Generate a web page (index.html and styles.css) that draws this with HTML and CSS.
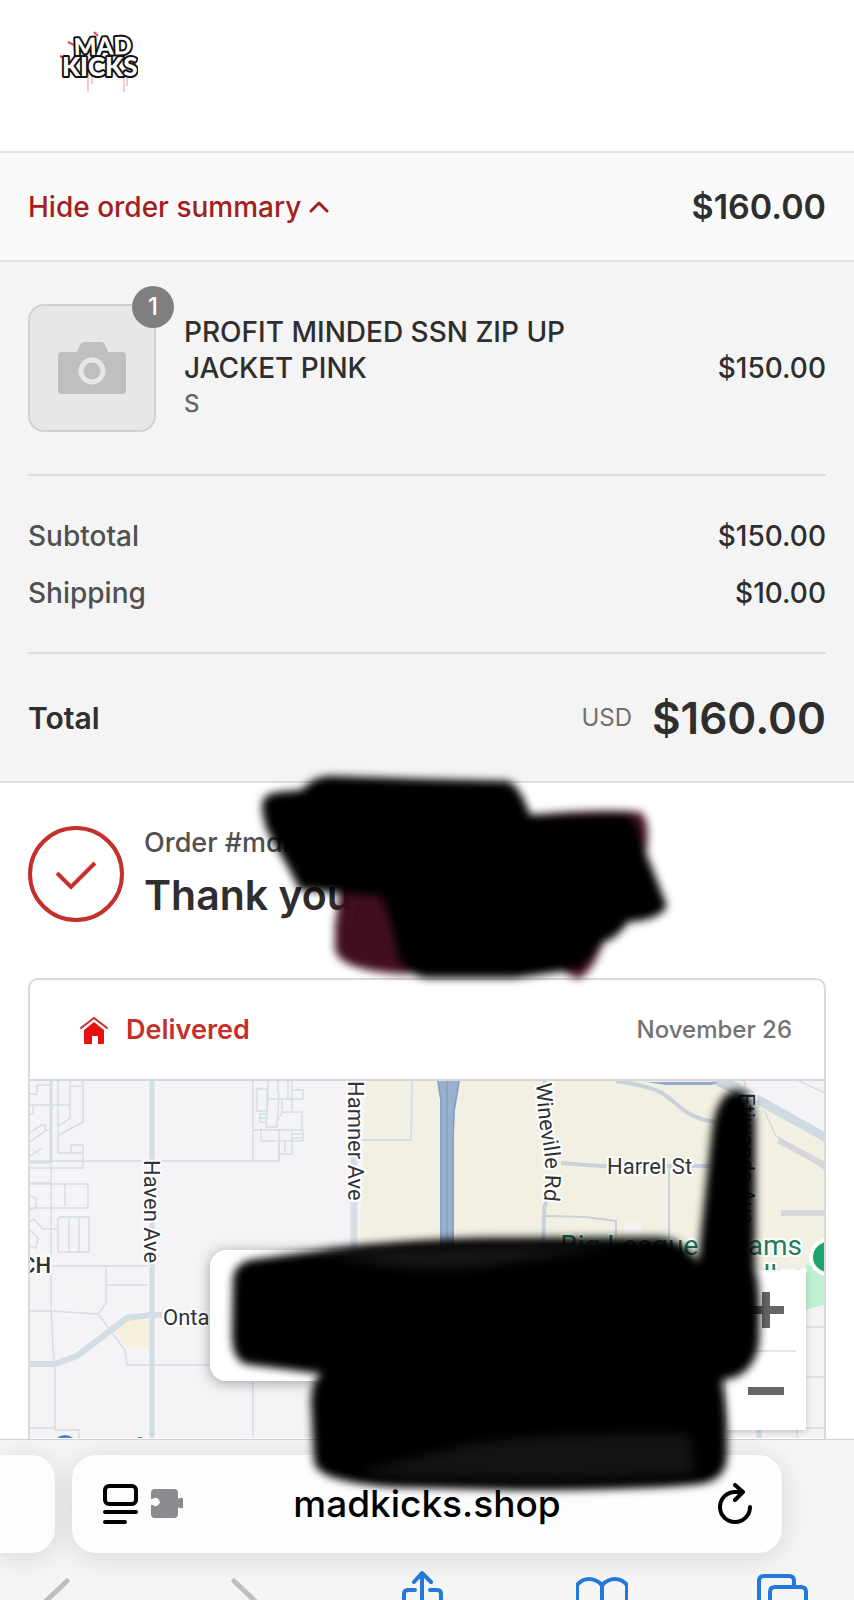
FILE: index.html
```html
<!DOCTYPE html>
<html lang="en">
  <head>
    <meta charset="UTF-8" />
    <meta name="viewport" content="width=device-width, initial-scale=1" />
    <title>Thank you - Mad Kicks</title>
    <link rel="stylesheet" href="styles.css">
  </head>
  <body>
    <div class="page">
      <header class="site-header">
        <a href="#" aria-label="Mad Kicks">
          <svg class="logo" viewBox="56 28 82 66">
            <g stroke="#e05050" fill="none" stroke-width="1">
              <path d="M88 72V92M92 72V84M124 72V92M127 72V86" opacity=".6" />
              <path d="M68 42l8 4M94 32l4 4M118 54l6-3M60 56l6 3M130 66l6-3M132 62l3-4" stroke-width="2" />
            </g>
            <g class="logo-text">
              <text x="74" y="55" font-size="24" transform="rotate(-2 96 54)">MAD</text>
              <text x="62" y="76" font-size="26">KICKS</text>
            </g>
          </svg>
        </a>
      </header>

      <div class="summary-bar">
        <button class="summary-toggle" type="button" aria-expanded="true">
          Hide order summary
          <svg width="20" height="12" viewBox="0 0 20 12"><path d="M2 10l8-8 8 8" fill="none" stroke="currentColor" stroke-width="3" stroke-linecap="round" stroke-linejoin="round" /></svg>
        </button>
        <strong class="summary-price">$160.00</strong>
      </div>

      <section class="summary">
        <div class="product">
          <div class="thumb">
            <svg width="68" height="53" viewBox="0 0 68 53">
              <path fill="#bfbfbf" d="M4 10h15l3-7q1-3 4-3h17q3 0 4 3l3 7h14q4 0 4 4v34q0 4-4 4H4q-4 0-4-4V14q0-4 4-4z" />
              <circle cx="34" cy="29" r="11" fill="#bfbfbf" stroke="#e7e7e7" stroke-width="5" />
            </svg>
            <span class="badge">1</span>
          </div>
          <div class="product-info">
            <div class="product-name">PROFIT MINDED SSN ZIP UP JACKET PINK</div>
            <div class="variant">S</div>
          </div>
          <div class="price">$150.00</div>
        </div>

        <table class="lines">
          <tr><th>Subtotal</th><td>$150.00</td></tr>
          <tr><th>Shipping</th><td>$10.00</td></tr>
        </table>

        <div class="total">
          <span class="total-label">Total</span>
          <span class="currency">USD</span>
          <strong class="total-price">$160.00</strong>
        </div>
      </section>

      <main class="content">
        <div class="thanks">
          <svg class="check" width="96" height="96" viewBox="0 0 96 96" fill="none" stroke="#c4302b">
            <circle cx="48" cy="48" r="46" stroke-width="4" />
            <path d="M29 47l14 14 24-24" stroke-width="4" />
          </svg>
          <div>
            <div class="order-no">Order #mdk</div>
            <h1>Thank you, E</h1>
          </div>
        </div>

        <div class="card">
          <div class="card-head">
            <svg width="28" height="28" viewBox="0 0 28 28">
              <path d="M1 12L14 2l13 10" fill="none" stroke="#c4302b" stroke-width="2" stroke-linecap="round" />
              <path d="M14 6l10 8v13q0 1-1 1h-5v-8h-6v8H5q-1 0-1-1V14z" fill="#e91010" />
            </svg>
            <h2>Delivered</h2>
            <span class="date">November 26</span>
          </div>

          <div class="map">
            <svg class="map-art" viewBox="30 1081 794 357" preserveAspectRatio="xMinYMin slice">
              <rect x="30" y="1081" width="800" height="360" fill="#f5f3f5" />
              <path d="M366 1081H830V1300L806 1310H357z" fill="#f2f0e3" />
              <path d="M745 1081H830V1140L757 1098z" fill="#f4f3f5" />
              <path d="M806 1264l20 8v32l-20 6z" fill="#bdf0cf" />
              <path d="M806 1312l24-9v140h-24z" fill="#f5f3f5" />
              <path d="M112 1328l16-8h23v27q-18 2-26-2z" fill="#f5f0dc" />

              <!-- small streets -->
              <g fill="none" stroke="#d3dfe6" stroke-width="1.5">
                <path d="M30 1161H279V1140M253 1081V1161M253 1382V1440M51 1162V1310L54 1362M55 1364V1430L79 1430V1440M30 1428h25" />
                <path d="M30 1105H70V1090M58 1081V1153H83V1145H71V1153M70 1081V1118L59 1126M83 1081V1122L59 1135M70 1086H83M30 1168H83V1153M30 1183H51" />
                <path d="M30 1094H37V1085H51M30 1114H33V1105M30 1132L42 1125H45V1131L30 1142M45 1130h6M42 1148l-12 8" />
                <path d="M30 1184H88V1208H30M65 1184V1206M30 1196l6 2v9l-6 3M30 1222l4-3 9 10H58V1219l2-2H89V1252H58V1229M69 1217v35M79 1217v35M30 1230l8 8-2 10-6-2" />
                <path d="M51 1266H148M106 1266V1303L98 1314M106 1285H148M30 1311H51L98 1314L125 1350L127 1365H210" />
                <path d="M268 1081V1099M278 1081V1094M288 1081V1099M292 1081V1111M257 1089H267V1111H257zM293 1090H303V1099H268M268 1099L266 1127H277L279 1094M260 1114H266M260 1118H266M260 1114V1122H266M282 1112H302V1130H254M278 1120L282 1112V1099M261 1128V1141H303V1130M292 1130V1154H279M285 1141V1154M292 1134H303M292 1138H303M279 1130V1161" />
                <path d="M412 1081L411 1140H362" stroke-width="2" />
                <path d="M806 1327h24M806 1377h24M806 1428h24M797 1430v10" />
              </g>
              <g fill="none" stroke="#d3dde4">
                <path d="M51 1081V1162H30" stroke-width="3" />
                <path d="M152 1081V1440" stroke-width="5" />
                <path d="M354 1081V1260" stroke-width="7" stroke="#d7dfe6" />
                <path d="M30 1364H55L77 1356L110 1331L127 1318L151 1315H162" stroke-width="6" />
                <path d="M759 1430v10" stroke-width="5" />
              </g>

              <!-- freeway -->
              <path d="M437 1081h23l-5 30-1 25v120h-14V1100z" fill="#9ab0cf" />
              <path d="M438 1081l3 20v155M459 1081l-5 30-1 25v120M447 1081v175" fill="none" stroke="#7f97bd" stroke-width="1" />

              <g fill="none" stroke="#c9d1d9">
                <path d="M545 1081V1090M547 1200Q544 1205 544 1215L543 1250M561 1163L600 1166H712" stroke-width="4" />
                <path d="M616 1081Q650 1086 662 1093C680 1105 685 1118 716 1122" stroke-width="4" />
                <path d="M669 1166V1240M546 1216L585 1217L616 1221V1236" stroke-width="2" />
                <path d="M719 1078L830 1140" stroke-width="9" stroke="#cfdbe2" />
                <path d="M712 1081l35 18" stroke-width="4" />
                <path d="M778 1140L830 1168M781 1213H830" stroke-width="6" stroke="#d5d8dc" />
                <path d="M764 1110l12 26 52 36M745 1080v16M797 1080l30 14" stroke-width="1" />
              </g>
              <path d="M646 1082h72l-6 3h-46z" fill="#92aad0" />
              <rect x="624" y="1223" width="17" height="10" fill="#f5f3f5" />

              <g class="map-label">
                <text transform="translate(144 1160) rotate(90)">Haven Ave</text>
                <text transform="translate(348 1081) rotate(90)">Hamner Ave</text>
                <text transform="translate(739 1093) rotate(90)">Etiwanda Ave</text>
                <path id="wineville" d="M536 1083Q538 1120 543 1145T542 1215" fill="none" stroke="none" />
                <text><textPath href="#wineville">Wineville Rd</textPath></text>
                <text x="607" y="1174">Harrel St</text>
                <text x="163" y="1325">Ontario</text>
                <text class="city" x="51" y="1273" text-anchor="end">RANCH</text>
                <g class="poi">
                  <text x="802" y="1255" text-anchor="end">Big League Dreams</text>
                  <text x="805" y="1285" text-anchor="end">Jurupa Valley</text>
                </g>
              </g>
              <circle cx="828" cy="1257" r="17" fill="#1ea36c" stroke="#fff" stroke-width="4" />
              <circle cx="65" cy="1447" r="12" fill="#4f7fc8" />
              <path d="M138 1437h4v3h-4z" fill="#3b9460" />
            </svg>
            <div class="popup"></div>
            <div class="zoom">
              <button type="button" aria-label="Zoom in"><svg width="36" height="36" viewBox="0 0 36 36"><path d="M0 18h36M18 0v36" stroke="#666" stroke-width="8" /></svg></button>
              <button type="button" aria-label="Zoom out"><svg width="36" height="36" viewBox="0 0 36 36"><path d="M0 18h36" stroke="#666" stroke-width="8" /></svg></button>
            </div>
          </div>
        </div>
      </main>

      <footer class="browser">
        <div class="tabs">
          <div class="tab-prev"></div>
          <div class="tab">
            <button type="button" aria-label="Page menu">
              <svg width="82" height="42" viewBox="0 0 82 42">
                <g fill="none" stroke="#000" stroke-width="4" stroke-linecap="round">
                  <rect x="4" y="3" width="31" height="18" rx="4" />
                  <path d="M4 29h31M4 39h20" />
                </g>
                <path fill="#8a8a8f" d="M54 6h19q4 0 4 4v6a5 5 0 1 1 0 8v7q0 4-4 4H54q-4 0-4-4v-9h2a4 4 0 1 0 0-6h-2v-6q0-4 4-4z" />
              </svg>
            </button>
            <a class="url" href="#">madkicks.shop</a>
            <button type="button" aria-label="Reload">
              <svg width="36" height="42" viewBox="0 0 36 42" fill="none" stroke="#000" stroke-width="4" stroke-linecap="round" stroke-linejoin="round">
                <path d="M33 24A15 15 0 1 1 18 9h6M18 2l8 7-8 8" />
              </svg>
            </button>
          </div>
        </div>
        <nav class="toolbar">
          <button type="button" aria-label="Back"><svg viewBox="0 0 52 52"><path d="M30 12L8 33l22 21" stroke="#bfbfc1" stroke-width="5" /></svg></button>
          <button type="button" aria-label="Forward"><svg viewBox="0 0 52 52"><path d="M17 12l22 21-22 21" stroke="#bfbfc1" stroke-width="5" /></svg></button>
          <button type="button" aria-label="Share"><svg viewBox="0 0 52 52"><path d="M25 40V5M17 13l8-9 9 9M18 21h-7q-4 0-4 4v28M33 21h7q4 0 4 4v28" /></svg></button>
          <button type="button" aria-label="Bookmarks"><svg viewBox="0 0 52 52"><path d="M26 52V16Q20 10 13 10T1 16v36M26 16q6-6 13-6t12 6v36" /></svg></button>
          <button type="button" aria-label="Tabs"><svg viewBox="0 0 52 52"><path d="M3 52V12q0-5 5-5h25q5 0 5 5v6M14 52V23q0-5 5-5h26q5 0 5 5v29" /></svg></button>
        </nav>
      </footer>

      <!-- marker strokes over private details -->
      <svg class="marker" viewBox="0 0 854 1600" aria-hidden="true">
        <g filter="url(#soft)">
          <path d="M342 880L335 925V950Q340 970 400 974L560 970L578 979Q592 972 600 950L645 860Q652 820 640 812Q600 808 520 816z" fill="#3c091c" fill-opacity=".98" />
          <path d="M262 806Q262 793 280 792L302 790Q312 777 330 776L420 779L508 781Q520 786 530 815L626 814Q636 820 644 848L667 906Q660 920 628 922Q616 940 602 942Q588 964 573 970L515 978H425Q405 974 398 955Q392 920 382 896L300 890Q285 860 272 840Q263 825 262 806z" />
        </g>
        <g filter="url(#soft)">
          <path d="M233 1278Q236 1260 258 1259L300 1253Q400 1240 480 1238L660 1237Q685 1240 698 1262L712 1130Q718 1090 738 1090Q755 1092 755 1125V1270Q761 1285 759 1345Q752 1378 722 1380Q728 1410 727 1455Q727 1480 700 1484Q640 1490 520 1490L400 1487Q314 1483 314 1460L311 1400Q312 1380 322 1374L245 1364Q232 1358 232 1335z" />
        </g>
        <g filter="url(#softer)">
          <path d="M320 1254Q400 1246 620 1246L500 1264Q440 1272 390 1266z" fill="#161616" />
          <path d="M355 1473L480 1442Q600 1430 690 1434L695 1474Q620 1480 520 1480L400 1478z" fill="#131313" />
        </g>
        <defs>
          <filter id="soft" x="-5%" y="-5%" width="110%" height="110%" color-interpolation-filters="sRGB"><feGaussianBlur stdDeviation="4" /></filter>
          <filter id="softer" x="-10%" y="-10%" width="120%" height="120%" color-interpolation-filters="sRGB"><feGaussianBlur stdDeviation="6" /></filter>
        </defs>
      </svg>
    </div>
  </body>
</html>
```
FILE: styles.css
```css
* { box-sizing: border-box; }
body {
    margin: 0;
    font-family: Inter, "Liberation Sans", sans-serif;
    font-size: 28px;
    font-weight: 500;
    line-height: 36px;
    color: #2e2e2e;
    background: #fff;
}
h1, h2 { margin: 0; }
button {
    padding: 0;
    border: 0;
    background: none;
    font: inherit;
    color: inherit;
}
a { color: inherit; text-decoration: none; }
svg { display: block; }

.page {
    position: relative;
    display: flex;
    flex-direction: column;
    height: 100vh;
    overflow: hidden;
}

.site-header {
    flex: none;
    padding: 28px 56px 57px;
    border-bottom: 2px solid #e3e3e3;
}
.logo { width: 82px; height: 66px; }
.logo-text {
    font-family: Lato, sans-serif;
    font-weight: 900;
    fill: #fff;
    stroke: #111;
    stroke-width: 4px;
    stroke-linejoin: round;
    paint-order: stroke;
}

/* order summary */
.summary-bar {
    flex: none;
    display: flex;
    align-items: center;
    justify-content: space-between;
    height: 109px;
    padding: 0 28px;
    background: #fafafa;
    border-bottom: 2px solid #e0e0e0;
}
.summary-toggle {
    display: flex;
    align-items: center;
    gap: 8px;
    color: #a32020;
}
.summary-price { font-size: 34px; font-weight: 600; }
.summary {
    flex: none;
    padding: 42px 28px 0;
    background: #f4f4f4;
    border-bottom: 2px solid #dedede;
}
.product {
    display: flex;
    align-items: center;
    padding-bottom: 42px;
}
.thumb {
    position: relative;
    display: flex;
    align-items: center;
    justify-content: center;
    width: 128px;
    height: 128px;
    border: 2px solid #d0d0d0;
    border-radius: 16px;
    background: #e7e7e7;
}
.badge {
    position: absolute;
    top: -20px;
    right: -20px;
    width: 42px;
    height: 42px;
    border-radius: 50%;
    background: #7f7f7f;
    color: #fff;
    font-size: 24px;
    line-height: 42px;
    text-align: center;
}
.product-info { width: 400px; margin: 0 auto 0 28px; }
.variant { font-size: 24px; color: #666; }
.lines {
    width: 100%;
    padding: 31px 0;
    border: solid #dcdcdc;
    border-width: 2px 0;
    border-spacing: 0;
}
.lines th, .lines td { height: 57px; padding: 0; }
.lines th { font-weight: 500; text-align: left; color: #505050; }
.lines td { text-align: right; }
.total {
    display: flex;
    align-items: center;
    height: 127px;
}
.total-label { margin-right: auto; font-size: 30px; font-weight: 600; }
.currency { margin-right: 20px; font-size: 24px; font-weight: 400; color: #707070; }
.total-price { font-size: 44px; font-weight: 600; }

/* confirmation */
.content {
    flex: 1;
    min-height: 0;
    padding: 43px 28px 0;
    overflow: hidden;
}
.thanks {
    display: flex;
    align-items: center;
    gap: 20px;
    height: 96px;
    margin-bottom: 56px;
}
.order-no { font-size: 27px; color: #505050; }
h1 {
    padding: 10px 0 4px;
    font-size: 41px;
    font-weight: 600;
    line-height: 48px;
}
.card {
    border: 2px solid #dadada;
    border-radius: 10px;
    overflow: hidden;
}
.card-head {
    display: flex;
    align-items: center;
    height: 101px;
    padding: 0 32px 0 50px;
    border-bottom: 2px solid #d5d8da;
}
h2 {
    margin: 0 auto 0 18px;
    font-size: 27px;
    font-weight: 600;
    color: #c4302b;
}
.date { font-size: 24px; color: #737373; }

.map { position: relative; height: 400px; }
.map-art { width: 100%; height: 357px; }
.map-label {
    font-family: Roboto, sans-serif;
    font-size: 22px;
    font-weight: 400;
    fill: #2f3438;
    stroke: #fff;
    stroke-width: 4px;
    stroke-linejoin: round;
    paint-order: stroke;
}
.city { font-weight: 500; }
.poi { font-size: 28px; fill: #1e7f5c; }
.popup {
    position: absolute;
    top: 169px;
    left: 180px;
    width: 434px;
    height: 131px;
    border-radius: 16px;
    background: #fff;
    box-shadow: 0 2px 14px rgba(0, 0, 0, .35);
}
.zoom {
    position: absolute;
    top: 189px;
    right: 18px;
    width: 80px;
    background: #fff;
    box-shadow: 0 2px 6px rgba(0, 0, 0, .2);
}
.zoom button {
    display: flex;
    align-items: center;
    justify-content: center;
    width: 60px;
    height: 80px;
    margin: 0 10px;
}
.zoom button + button { border-top: 2px solid #e6e6e6; }

/* browser bar */
.browser {
    flex: none;
    height: 161px;
    padding-top: 15px;
    border-top: 1px solid #d0d0d2;
    background: #f5f5f5;
    overflow: hidden;
}
.tabs { display: flex; gap: 17px; padding-right: 72px; }
.tab, .tab-prev {
    height: 98px;
    border-radius: 24px;
    background: #fdfdfd;
    box-shadow: 0 4px 28px rgba(0, 0, 0, .13);
}
.tab-prev {
    width: 55px;
    border-top-left-radius: 0;
    border-bottom-left-radius: 0;
}
.tab {
    flex: 1;
    display: grid;
    grid-template-columns: 1fr auto 1fr;
    align-items: center;
    padding: 0 29px;
    color: #000;
}
.tab button { justify-self: start; }
.tab button:last-child { justify-self: end; }
.url { font-size: 37px; line-height: 48px; }
.toolbar {
    display: flex;
    justify-content: space-between;
    padding: 16px 46px 0 37px;
}
.toolbar svg {
    width: 52px;
    height: 52px;
    fill: none;
    stroke: #2478dc;
    stroke-width: 4px;
    stroke-linecap: round;
    stroke-linejoin: round;
}

.marker {
    position: absolute;
    top: 0;
    left: 0;
    width: 100%;
    pointer-events: none;
}
```
